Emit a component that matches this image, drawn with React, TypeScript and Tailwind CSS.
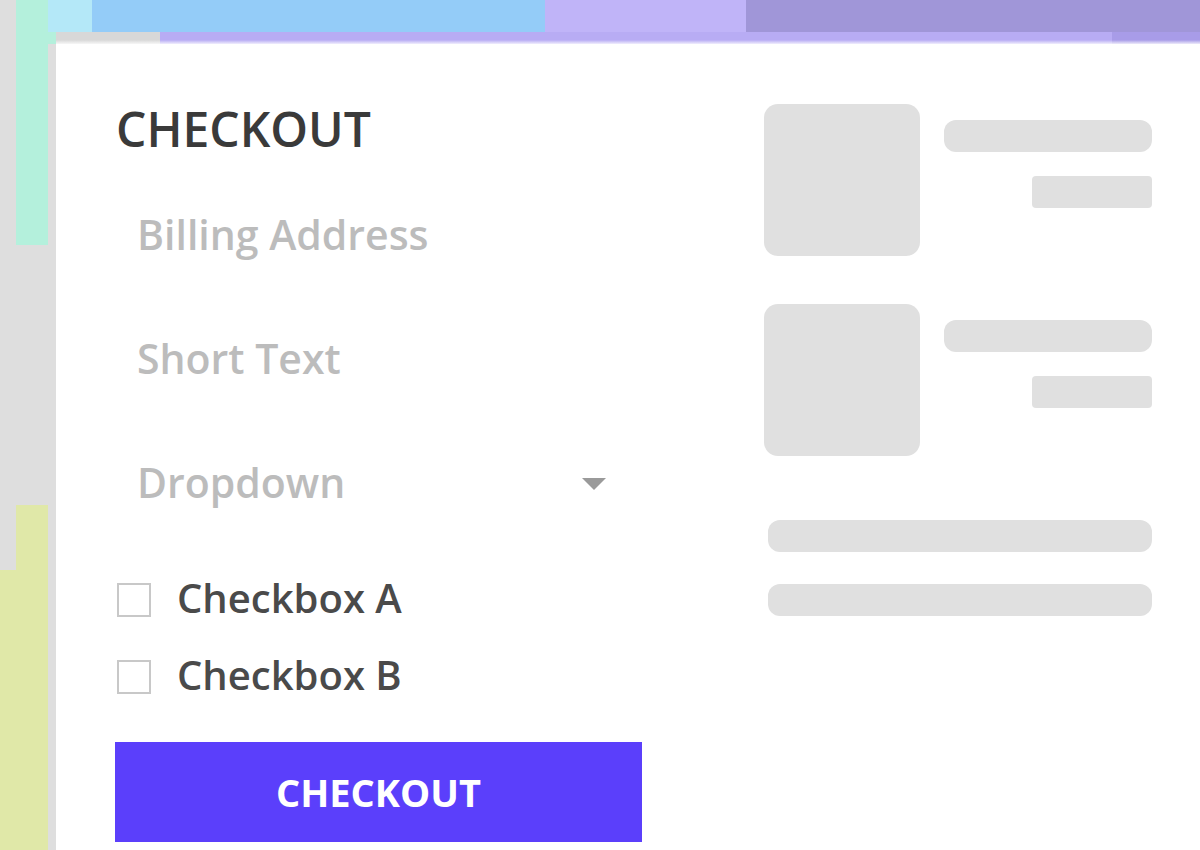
import React from "react";

const Field: React.FC<{ label: string; dropdown?: boolean }> = ({ label, dropdown }) => (
  <div className="flex items-center justify-between h-[48px] pl-[22px] pr-[34px]">
    <span className="text-[41px] leading-[48px] font-semibold text-[#bcbcbc]">{label}</span>
    {dropdown && (
      <svg width="28" height="18" viewBox="0 0 28 18" className="mt-[4px]">
        <path d="M2 3 L26 3 L14 15 Z" fill="#9a9a9a" />
      </svg>
    )}
  </div>
);

const Check: React.FC<{ label: string }> = ({ label }) => (
  <label className="flex items-center h-[48px] gap-[26px]">
    <span className="w-[34px] h-[34px] border-2 border-[#c8c8c8] bg-white mt-[4px]" />
    <span className="text-[40px] leading-[48px] font-semibold text-[#4a4a4a]">{label}</span>
  </label>
);

const Item: React.FC = () => (
  <div className="flex gap-[24px]">
    <div className="w-[156px] h-[152px] rounded-[14px] bg-[#e0e0e0]" />
    <div className="flex-1 flex flex-col items-end pt-[16px] gap-[24px]">
      <div className="w-full h-[32px] rounded-[12px] bg-[#e0e0e0]" />
      <div className="w-[120px] h-[32px] rounded-[4px] bg-[#e0e0e0]" />
    </div>
  </div>
);

export default function App() {
  return (
    <div className="w-[1200px] h-[850px] overflow-hidden flex font-['Open_Sans',sans-serif]">
      <div className="w-[56px] h-full flex">
        <div className="w-[16px] h-full bg-[linear-gradient(180deg,#dedede_0px,#dedede_570px,#e0e8a8_570px)]" />
        <div className="w-[32px] h-full bg-[linear-gradient(180deg,#b4f0dc_0px,#b4f0dc_245px,#dedede_245px,#dedede_505px,#e0e8a8_505px)]" />
        <div className="w-[8px] h-full bg-[linear-gradient(180deg,#b4e8f8_0px,#b4e8f8_32px,#b4f0dc_32px,#b4f0dc_44px,#dedede_44px)]" />
      </div>
      <div className="flex-1 flex flex-col">
        <div className="h-[32px] bg-[linear-gradient(90deg,#b4e8f8_0px,#b4e8f8_36px,#94ccf8_36px,#94ccf8_489px,#c0b4f8_489px,#c0b4f8_690px,#a096d8_690px)]" />
        <div className="h-[12px] bg-[linear-gradient(180deg,rgba(255,255,255,0)_0px,rgba(255,255,255,0)_8px,rgba(255,255,255,0.8)_12px),linear-gradient(90deg,#d8d8d8_0px,#d8d8d8_104px,#b8acf4_104px,#b8acf4_1056px,#a89ce8_1056px)]" />
        <div className="flex-1 bg-white flex pl-[59px] pt-[61px]">
          <div className="w-[527px] flex flex-col">
            <h1 className="text-[48px] leading-[48px] font-semibold text-[#3a3a3a] pl-[1px]">CHECKOUT</h1>
            <div className="flex flex-col gap-[76px] mt-[57px]">
              <Field label="Billing Address" />
              <Field label="Short Text" />
              <Field label="Dropdown" dropdown />
            </div>
            <div className="flex flex-col gap-[29px] mt-[68px] pl-[2px]">
              <Check label="Checkbox A" />
              <Check label="Checkbox B" />
            </div>
            <button className="mt-[43px] h-[100px] w-full bg-[#5b3ffb] text-white text-[38px] font-bold">
              CHECKOUT
            </button>
          </div>
          <div className="w-[388px] ml-[122px] flex flex-col">
            <div className="flex flex-col gap-[48px] -mt-[1px]">
              <Item />
              <Item />
            </div>
            <div className="flex flex-col gap-[32px] mt-[64px] pl-[4px]">
              <div className="h-[32px] rounded-[12px] bg-[#e0e0e0]" />
              <div className="h-[32px] rounded-[12px] bg-[#e0e0e0]" />
            </div>
          </div>
        </div>
      </div>
    </div>
  );
}
